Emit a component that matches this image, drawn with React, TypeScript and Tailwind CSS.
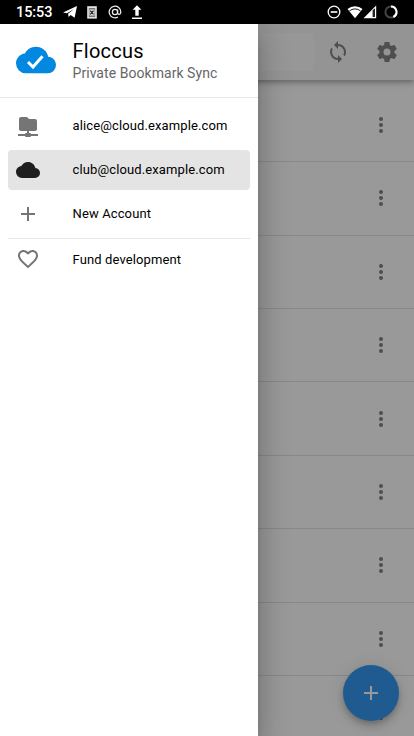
import React from "react";

const CLOUD =
  "M19.35,10.03C18.67,6.59 15.64,4 12,4C9.11,4 6.6,5.64 5.35,8.03C2.34,8.36 0,10.9 0,14A6,6 0 0,0 6,20H19A5,5 0 0,0 24,15C24,12.36 21.95,10.22 19.35,10.03Z";
const FOLDER_NETWORK =
  "M3,15V5A2,2 0 0,1 5,3H11L13,5H19A2,2 0 0,1 21,7V15A2,2 0 0,1 19,17H13V19H14A1,1 0 0,1 15,20H22V22H15A1,1 0 0,1 14,23H10A1,1 0 0,1 9,22H2V20H9A1,1 0 0,1 10,19H11V17H5A2,2 0 0,1 3,15Z";
const SYNC =
  "M12,18A6,6 0 0,1 6,12C6,11 6.25,10.03 6.7,9.2L5.24,7.74C4.46,8.97 4,10.43 4,12A8,8 0 0,0 12,20V23L16,19L12,15M12,4V1L8,5L12,9V6A6,6 0 0,1 18,12C18,13 17.75,13.97 17.3,14.8L18.76,16.26C19.54,15.03 20,13.57 20,12A8,8 0 0,0 12,4Z";
const COG =
  "M12,15.5A3.5,3.5 0 0,1 8.5,12A3.5,3.5 0 0,1 12,8.5A3.5,3.5 0 0,1 15.5,12A3.5,3.5 0 0,1 12,15.5M19.43,12.97C19.47,12.65 19.5,12.33 19.5,12C19.5,11.67 19.47,11.34 19.43,11L21.54,9.37C21.73,9.22 21.78,8.95 21.66,8.73L19.66,5.27C19.54,5.05 19.27,4.96 19.05,5.05L16.56,6.05C16.04,5.66 15.5,5.32 14.87,5.07L14.5,2.42C14.46,2.18 14.25,2 14,2H10C9.75,2 9.54,2.18 9.5,2.42L9.13,5.07C8.5,5.32 7.96,5.66 7.44,6.05L4.95,5.05C4.73,4.96 4.46,5.05 4.34,5.27L2.34,8.73C2.21,8.95 2.27,9.22 2.46,9.37L4.57,11C4.53,11.34 4.5,11.67 4.5,12C4.5,12.33 4.53,12.65 4.57,12.97L2.46,14.63C2.27,14.78 2.21,15.05 2.34,15.27L4.34,18.73C4.46,18.95 4.73,19.03 4.95,18.95L7.44,17.94C7.96,18.34 8.5,18.68 9.13,18.93L9.5,21.58C9.54,21.82 9.75,22 10,22H14C14.25,22 14.46,21.82 14.5,21.58L14.87,18.93C15.5,18.67 16.04,18.34 16.56,17.94L19.05,18.95C19.27,19.03 19.54,18.95 19.66,18.73L21.66,15.27C21.78,15.05 21.73,14.78 21.54,14.63L19.43,12.97Z";
const HEART =
  "M12.1,18.55L12,18.65L11.89,18.55C7.14,14.24 4,11.39 4,8.5C4,6.5 5.5,5 7.5,5C9.04,5 10.54,6 11.07,7.36H12.93C13.46,6 14.96,5 16.5,5C18.5,5 20,6.5 20,8.5C20,11.39 16.86,14.24 12.1,18.55M16.5,3C14.76,3 13.09,3.81 12,5.08C10.91,3.81 9.24,3 7.5,3C4.42,3 2,5.41 2,8.5C2,12.27 5.4,15.36 10.55,20.03L12,21.35L13.45,20.03C18.6,15.36 22,12.27 22,8.5C22,5.41 19.58,3 16.5,3Z";
const PLUS = "M19,13H13V19H11V13H5V11H11V5H13V11H19V13Z";
const DOTS =
  "M12,16A2,2 0 0,1 14,18A2,2 0 0,1 12,20A2,2 0 0,1 10,18A2,2 0 0,1 12,16M12,10A2,2 0 0,1 14,12A2,2 0 0,1 12,14A2,2 0 0,1 10,12A2,2 0 0,1 12,10M12,4A2,2 0 0,1 14,6A2,2 0 0,1 12,8A2,2 0 0,1 10,6A2,2 0 0,1 12,4Z";

function Icon({ path, className = "" }: { path: string; className?: string }) {
  return (
    <svg viewBox="0 0 24 24" fill="currentColor" className={`size-6 shrink-0 ${className}`}>
      <path d={path} />
    </svg>
  );
}

function StatusBar() {
  return (
    <header className="flex h-6 shrink-0 items-center bg-black pl-4 pr-4 text-white">
      <span className="w-[46px] pt-px text-[14.5px] font-medium leading-6 tracking-[-0.1px]">15:53</span>
      <svg viewBox="0 0 16 14" className="h-[14px] w-4" fill="#fff">
        <path d="M1 7.4 15 1 12.6 12.8 8.6 9.9 6.6 12 6.1 8.7 12 4 5 8.2Z" />
      </svg>
      <svg viewBox="0 0 10 13" className="ml-[9px] h-[13px] w-[10px]">
        <rect x=".2" y=".2" width="9.6" height="12.4" fill="#e4e4e4" />
        <rect x="1.8" y="2" width="6.4" height="9" fill="#777" />
        <rect x="2.5" y="3.5" width="5" height="6" fill="#e4e4e4" />
        <path d="m3.3 4.6 3.2 3.8m0-3.8L3.3 8.4" stroke="#111" strokeWidth="1.1" />
      </svg>
      <svg viewBox="0 0 14 14" className="ml-[10.5px] size-[14px]" fill="none" stroke="#eee" strokeWidth="1.25">
        <circle cx="7" cy="7" r="2.6" />
        <path d="M9.6 4.4v3.3c0 2.5 3.2 2 3.2-.7A5.8 5.8 0 1 0 10 12" />
      </svg>
      <svg viewBox="0 0 10 14" className="ml-[10.5px] h-[14px] w-[10px]" fill="#fff">
        <path d="M5 .2.6 4.8h2.7v6h3.4v-6h2.7ZM0 12.4h10V14H0Z" />
      </svg>
      <div className="ml-auto flex items-center">
        <svg viewBox="0 0 14 14" className="size-[14px]" fill="none" stroke="#fff">
          <circle cx="7" cy="7" r="5.8" strokeWidth="1.3" />
          <path d="M3.7 7h6.6" strokeWidth="1.6" />
        </svg>
        <svg viewBox="0 0 16 14" className="ml-[6px] h-[14px] w-4">
          <path d="M.5 4a11.6 11.6 0 0 1 15 0L8 13.2Z" fill="#fff" />
          <path d="M2.4 6a8.5 8.5 0 0 1 11.2 0" fill="none" stroke="#000" strokeWidth=".9" />
        </svg>
        <svg viewBox="0 0 14 14" className="h-[14px] w-[14px]">
          <path d="M13.2.5V13.2H.5Z" fill="#fff" />
          <path d="M9.6 5.2V12.1H12V3.2Z" fill="#222" />
        </svg>
        <svg viewBox="0 0 14 14" className="ml-[7px] size-[14px]" fill="none" strokeWidth="2">
          <circle cx="7" cy="7" r="5.6" stroke="#444" />
          <path d="M7 1.4A5.6 5.6 0 0 1 9.4 12" stroke="#fff" />
        </svg>
      </div>
    </header>
  );
}

function Bookmarks() {
  return (
    <main className="h-full bg-white text-[#757575]">
      <div className="flex h-14 items-center bg-[#f5f5f5] shadow-[0_2px_4px_-1px_rgba(0,0,0,.2),0_4px_5px_rgba(0,0,0,.14),0_1px_10px_rgba(0,0,0,.12)]">
        <div className="h-[38px] w-[314px] rounded bg-[#fbfbfb]" />
        <Icon path={SYNC} className="ml-[12.4px]" />
        <Icon path={COG} className="ml-[24.2px]" />
      </div>
      <div className="pt-[8.8px]">
        {Array.from({ length: 9 }, (_, i) => (
          <div key={i} className="flex h-[73.42px] items-center justify-end border-b border-[#e0e0e0] pr-[21.5px]">
            <Icon path={DOTS} />
          </div>
        ))}
      </div>
    </main>
  );
}

function Item({ icon, label, active = false }: { icon: string; label: string; active?: boolean }) {
  return (
    <div
      className={`flex h-10 items-center rounded px-2 text-[13px] font-[450] leading-5 tracking-[0.12px] ${
        active ? "bg-[#e4e4e4] text-[#1e1e1e]" : "text-[#757575]"
      }`}
    >
      <Icon path={icon} />
      <span className="ml-[32.5px] whitespace-nowrap pt-px text-black">{label}</span>
    </div>
  );
}

function Drawer() {
  return (
    <nav className="absolute inset-y-0 left-0 w-[257.5px] bg-white shadow-[0_8px_10px_-5px_rgba(0,0,0,.2),0_16px_24px_2px_rgba(0,0,0,.14),0_6px_30px_5px_rgba(0,0,0,.12)]">
      <div className="flex h-[73.5px] items-center border-b-[1.5px] border-[#e6e6e6] pl-4">
        <svg viewBox="0 0 24 24" className="size-10">
          <path d={CLOUD} fill="#0288e0" />
          <path d="m7.2 13.2 3 3 5.7-6.4" fill="none" stroke="#fff" strokeWidth="1.8" />
        </svg>
        <div className="ml-[16.5px] whitespace-nowrap pt-[2px]">
          <div className="text-[20px] font-[450] leading-6 tracking-[0.25px] text-black">Floccus</div>
          <div className="text-[14px] leading-[21px] tracking-[0.05px] text-[#666]">Private Bookmark Sync</div>
        </div>
      </div>
      <div className="flex flex-col px-2 pt-2">
        <Item icon={FOLDER_NETWORK} label="alice@cloud.example.com" />
        <div className="mt-1">
          <Item icon={CLOUD} label="club@cloud.example.com" active />
        </div>
        <div className="mt-1">
          <Item icon={PLUS} label="New Account" />
        </div>
        <div className="mt-1 border-t-[1.5px] border-[#e6e6e6] pt-[0.5px]">
          <Item icon={HEART} label="Fund development" />
        </div>
      </div>
    </nav>
  );
}

export default function App() {
  return (
    <div className="flex h-[736px] w-[414px] flex-col overflow-hidden font-['Roboto',sans-serif]">
      <StatusBar />
      <div className="relative min-h-0 flex-1 overflow-hidden">
        <Bookmarks />
        <button className="absolute bottom-[15.5px] right-[15.5px] flex size-14 items-center justify-center rounded-full bg-[#1f8df0] text-white shadow-[0_3px_5px_-1px_rgba(0,0,0,.2),0_6px_10px_rgba(0,0,0,.14),0_1px_18px_rgba(0,0,0,.12)]">
          <Icon path={PLUS} />
        </button>
        <div className="absolute inset-0 bg-[#212121]/46" />
        <Drawer />
      </div>
    </div>
  );
}
